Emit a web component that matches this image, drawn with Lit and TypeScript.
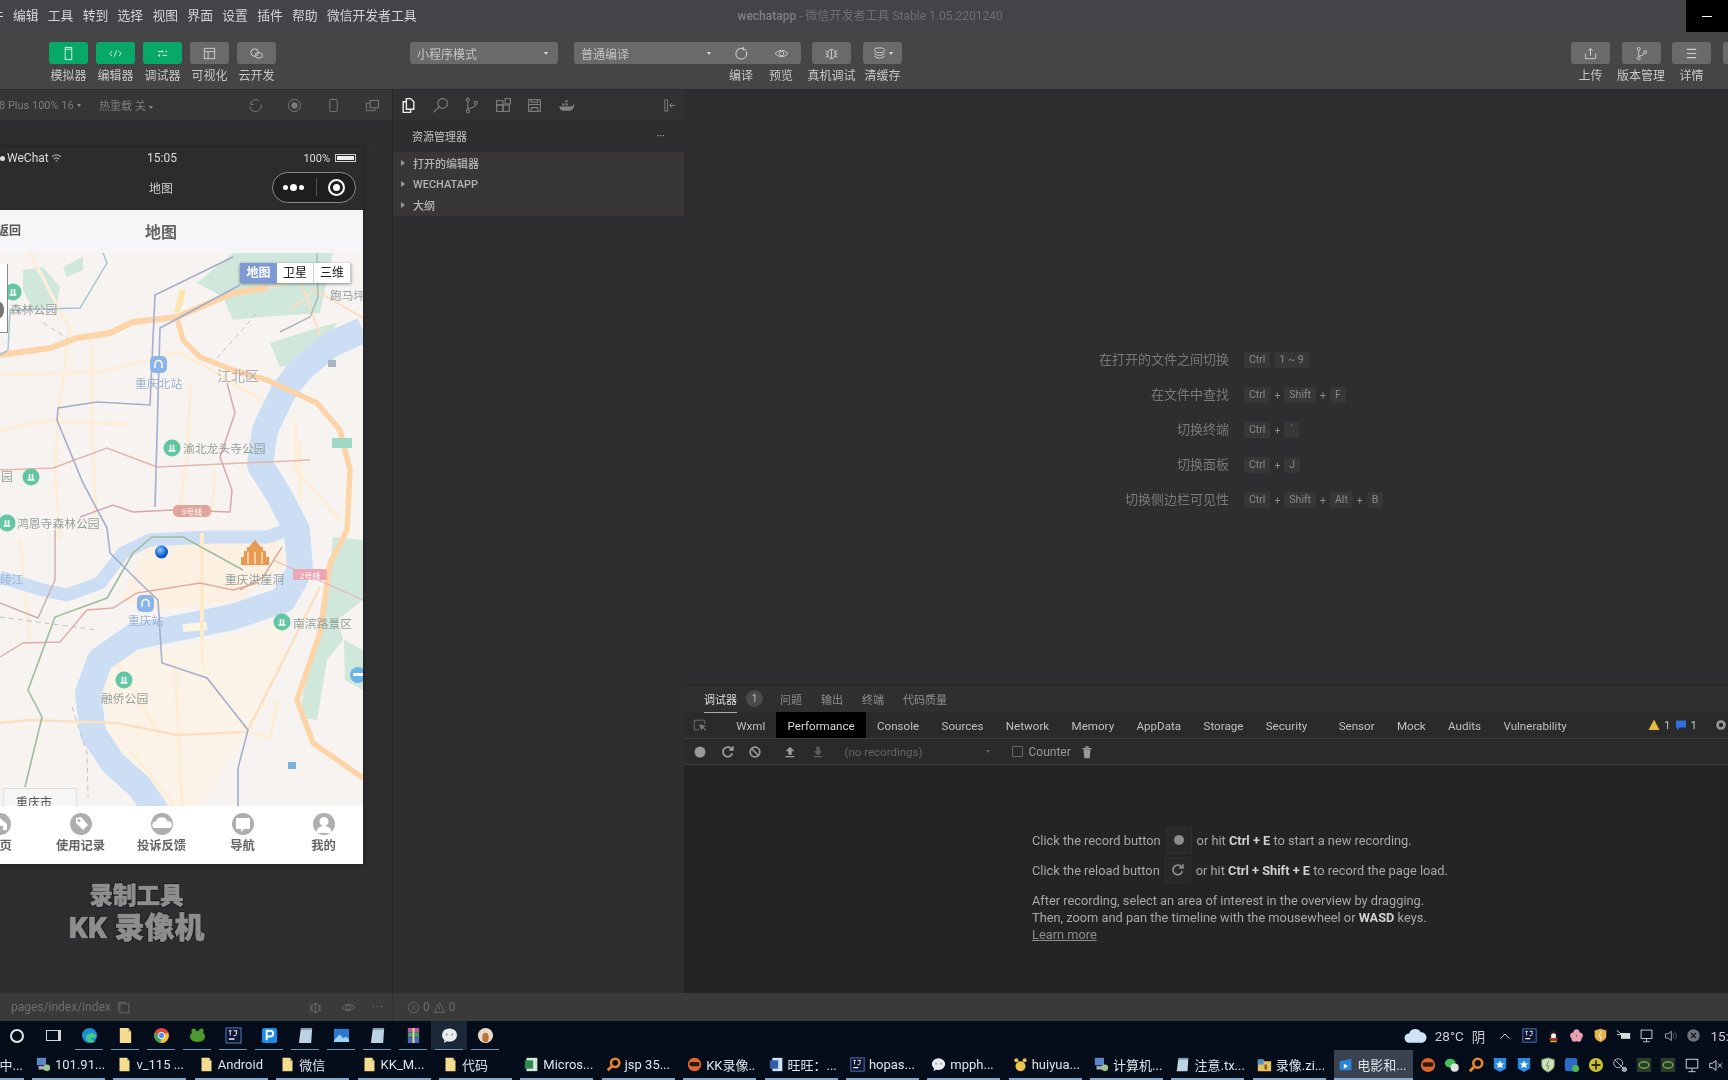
import { LitElement, html, css, svg } from 'lit';
import { customElement } from 'lit/decorators.js';

const MENU = ['编辑', '工具', '转到', '选择', '视图', '界面', '设置', '插件', '帮助', '微信开发者工具'];
const DEV_TABS = ['Wxml', 'Performance', 'Console', 'Sources', 'Network', 'Memory', 'AppData', 'Storage', 'Security', 'Sensor', 'Mock', 'Audits', 'Vulnerability'];
const SHORTCUTS = [
  { label: '在打开的文件之间切换', keys: ['Ctrl', '1 ~ 9'], plain: true },
  { label: '在文件中查找', keys: ['Ctrl', 'Shift', 'F'] },
  { label: '切换终端', keys: ['Ctrl', '`'] },
  { label: '切换面板', keys: ['Ctrl', 'J'] },
  { label: '切换侧边栏可见性', keys: ['Ctrl', 'Shift', 'Alt', 'B'] },
];
const TABBAR = ['首页', '使用记录', '投诉反馈', '导航', '我的'];
const TASKS = [
  ['', '下载中...'], ['pc', '101.91...'], ['folder', 'v_115 ...'], ['folder', 'Android'], ['folder', '微信'],
  ['folder', 'KK_M...'], ['folder', '代码'], ['excel', 'Micros...'], ['search', 'jsp 35...'], ['kk', 'KK录像...'],
  ['word', '旺旺：...'], ['ij', 'hopas...'], ['bubble', 'mpph...'], ['paw', 'huiyua...'], ['pc', '计算机...'],
  ['note', '注意.tx...'], ['zip', '录像.zi...'], ['video', '电影和...'],
];
const QUICK = ['', '', 'edge', 'folder', 'chrome', 'frog', 'ij', 'p', 'note', 'photo', 'note', 'rar', 'bubble', 'avatar'];
const TRAY_TOP = ['ij', 'qq', 'flower', 'shield', 'plug', 'monitor', 'speaker', 'close'];
const TRAY_BOTTOM = ['kk', 'wechat2', 'search', 'star', 'star', 'shieldg', 'tile', 'plus', 'sat', 'nv', 'nv', 'monitor', 'mute'];

function winIcon(kind: string) {
  switch (kind) {
    case 'folder':
      return html`<svg viewBox="0 0 18 18"><path d="M3 1h9l3 4v12H3z" fill="#f6dc8e"/><path d="M12 1v4h3z" fill="#c9a85a"/></svg>`;
    case 'pc':
      return html`<svg viewBox="0 0 18 18"><rect x="1" y="1" width="11" height="9" fill="#5d86c8"/><rect x="3" y="11" width="8" height="4" fill="#aab2bd"/><circle cx="13" cy="13" r="4" fill="#9dc48a"/></svg>`;
    case 'excel':
      return html`<svg viewBox="0 0 18 18"><rect x="3" y="1" width="13" height="16" fill="#d6e8da"/><rect x="1" y="4" width="10" height="10" fill="#2f8a52"/></svg>`;
    case 'search':
      return html`<svg viewBox="0 0 18 18"><circle cx="11" cy="7" r="5" fill="none" stroke="#e8842c" stroke-width="3"/><path d="M7 11l-5 5" stroke="#e8842c" stroke-width="3.4"/></svg>`;
    case 'kk':
      return html`<svg viewBox="0 0 18 18"><circle cx="9" cy="9" r="8" fill="#e0662c"/><rect x="3" y="6" width="12" height="5" rx="2" fill="#2a1a12"/></svg>`;
    case 'word':
      return html`<svg viewBox="0 0 18 18"><rect x="4" y="1" width="12" height="16" fill="#cfe0f2"/><rect x="1" y="4" width="10" height="10" fill="#2f5fa8"/></svg>`;
    case 'ij':
      return html`<svg viewBox="0 0 18 18"><rect x="1" y="1" width="16" height="16" fill="#0b1430" stroke="#5f7fc0"/><rect x="4" y="12" width="6" height="1.5" fill="#fff"/><path d="M4 4h3M5.500 4v5M9 4h4M12 4v4q0 1.500-3 1.200" stroke="#fff" fill="none"/></svg>`;
    case 'bubble':
      return html`<svg viewBox="0 0 18 18"><ellipse cx="9" cy="8.500" rx="8" ry="7" fill="#e8edf0"/><path d="M4 13l-1 4 5-3z" fill="#e8edf0"/><circle cx="6" cy="8" r="1" fill="#8a9298"/><circle cx="12" cy="8" r="1" fill="#8a9298"/></svg>`;
    case 'paw':
      return html`<svg viewBox="0 0 18 18"><circle cx="9" cy="11" r="6" fill="#edc44c"/><circle cx="4" cy="4" r="2.400" fill="#edc44c"/><circle cx="14" cy="4" r="2.400" fill="#edc44c"/></svg>`;
    case 'note':
      return html`<svg viewBox="0 0 18 18"><path d="M4 2h12l-1 15H2z" fill="#bcd3e4"/><path d="M4 1h12v2H4z" fill="#7d99ad"/></svg>`;
    case 'zip':
      return html`<svg viewBox="0 0 18 18"><path d="M1 3h6l2 2h8v12H1z" fill="#e4c160"/><path d="M1 3h7v6H1z" fill="#4f8fd0"/><rect x="9" y="9" width="3" height="6" fill="#8a5a24"/></svg>`;
    case 'video':
      return html`<svg viewBox="0 0 18 18"><path d="M2 5l14-3v14H2z" fill="#2a85d8"/><path d="M7 8l5 3-5 3z" fill="#fff"/></svg>`;
    case 'edge':
      return html`<svg viewBox="0 0 18 18"><circle cx="9" cy="9" r="8" fill="#1a8fd6"/><path d="M5 12a6 6 0 0 1 11-3c1 3-4 3-6 2 1 3 4 5 6 3-3 4-9 3-11-2z" fill="#45c98c"/></svg>`;
    case 'chrome':
      return html`<svg viewBox="0 0 18 18"><circle cx="9" cy="9" r="8" fill="#dd4b3c"/><path d="M9 9L2 6a8 8 0 0 0 6 11z" fill="#3aa658"/><path d="M9 9l7-3a8 8 0 0 1-8 11z" fill="#f3c433"/><circle cx="9" cy="9" r="3.400" fill="#4a8ff0" stroke="#fff"/></svg>`;
    case 'frog':
      return html`<svg viewBox="0 0 18 18"><ellipse cx="9" cy="10" rx="8" ry="6" fill="#4d9a2c"/><circle cx="5" cy="4" r="2.500" fill="#4d9a2c"/><circle cx="13" cy="4" r="2.500" fill="#4d9a2c"/></svg>`;
    case 'p':
      return html`<svg viewBox="0 0 18 18"><rect x="1" y="1" width="16" height="16" rx="2" fill="#1c8ae6"/><path d="M6 14V4h4a3 3 0 0 1 0 6H6" fill="none" stroke="#fff" stroke-width="2"/></svg>`;
    case 'photo':
      return html`<svg viewBox="0 0 18 18"><rect x="1" y="2" width="16" height="14" fill="#2a78d0"/><path d="M1 14l6-6 4 4 3-2 3 3v3H1z" fill="#9fd0f4"/></svg>`;
    case 'rar':
      return html`<svg viewBox="0 0 18 18"><rect x="3" y="1" width="12" height="5" fill="#b85a9a"/><rect x="3" y="6" width="12" height="5" fill="#4c9a6c"/><rect x="3" y="11" width="12" height="6" fill="#4a6ab8"/><rect x="8" y="1" width="2" height="16" fill="#e8d8a0"/></svg>`;
    case 'avatar':
      return html`<svg viewBox="0 0 18 18"><circle cx="9" cy="9" r="8" fill="#e8dcc8"/><ellipse cx="9" cy="11" rx="3.400" ry="5" fill="#b8763c"/></svg>`;
    case 'qq':
      return html`<svg viewBox="0 0 18 18"><ellipse cx="9" cy="8" rx="5" ry="6" fill="#1a1a1a"/><ellipse cx="9" cy="10" rx="3" ry="3.600" fill="#f0f0f0"/><path d="M4 12h10v2H4z" fill="#d8322c"/><path d="M5 15h8v2H5z" fill="#eda72c"/></svg>`;
    case 'flower':
      return html`<svg viewBox="0 0 18 18"><circle cx="9" cy="5" r="3.600" fill="#e8a0ae"/><circle cx="5" cy="9" r="3.600" fill="#e8a0ae"/><circle cx="13" cy="9" r="3.600" fill="#e8a0ae"/><circle cx="6.500" cy="13" r="3.600" fill="#e8a0ae"/><circle cx="11.500" cy="13" r="3.600" fill="#e8a0ae"/></svg>`;
    case 'shield':
      return html`<svg viewBox="0 0 18 18"><path d="M9 1l7 2v6c0 4-3 6-7 8-4-2-7-4-7-8V3z" fill="#e8b24c"/><path d="M10 4l-3 6h3l-1 4" stroke="#fff" fill="none"/></svg>`;
    case 'shieldg':
      return html`<svg viewBox="0 0 18 18"><path d="M9 1l7 2v6c0 4-3 6-7 8-4-2-7-4-7-8V3z" fill="#cfe0c0" stroke="#6a9a4c"/><path d="M10 4l-3 6h3l-1 4" stroke="#4c8a3c" fill="none"/></svg>`;
    case 'plug':
      return html`<svg viewBox="0 0 18 18"><rect x="6" y="6" width="11" height="7" fill="#d8dce0"/><path d="M1 3l5 4M1 8h5" stroke="#fff"/></svg>`;
    case 'monitor':
      return html`<svg viewBox="0 0 18 18" fill="none" stroke="#e8e8e8"><rect x="2.500" y="2.500" width="13" height="10"/><path d="M9 13v3M5 16.500h8"/></svg>`;
    case 'speaker':
      return html`<svg viewBox="0 0 18 18" fill="none" stroke="#b8bcc4"><path d="M3 7h3l4-3v11l-4-3H3z"/><path d="M12 6q2 3 0 6M14 4q4 5 0 10" stroke="#5a6068"/></svg>`;
    case 'mute':
      return html`<svg viewBox="0 0 18 18" fill="none" stroke="#e8e8e8"><path d="M2 7h3l4-3v11l-4-3H2z"/><path d="M11 7l5 5M16 7l-5 5"/></svg>`;
    case 'close':
      return html`<svg viewBox="0 0 18 18"><circle cx="9" cy="9" r="7.500" fill="#6c7078"/><path d="M6 6l6 6M12 6l-6 6" stroke="#15181e" stroke-width="1.600"/></svg>`;
    case 'wechat2':
      return html`<svg viewBox="0 0 18 18"><ellipse cx="7" cy="7" rx="6" ry="5" fill="#3fc25a"/><circle cx="12" cy="12" r="4.600" fill="#dfe4e0"/></svg>`;
    case 'star':
      return html`<svg viewBox="0 0 18 18"><path d="M2 1h14v12l-7 4-7-4z" fill="#2a8ae0"/><path d="M9 4l1.500 3 3 .4-2.200 2 .6 3-2.900-1.500-2.900 1.500.6-3-2.200-2 3-.4z" fill="#fff"/></svg>`;
    case 'tile':
      return html`<svg viewBox="0 0 18 18"><rect x="1" y="1" width="14" height="15" rx="3" fill="#2a6cc8"/><circle cx="13" cy="13" r="4" fill="#4cb84c"/></svg>`;
    case 'plus':
      return html`<svg viewBox="0 0 18 18"><circle cx="9" cy="9" r="8" fill="#c8c030"/><path d="M9 4v10M4 9h10" stroke="#2a2a10" stroke-width="2"/></svg>`;
    case 'sat':
      return html`<svg viewBox="0 0 18 18" fill="none" stroke="#c8ccd0"><circle cx="7" cy="7" r="5"/><path d="M3 3l12 12"/><circle cx="14" cy="14" r="2.400" fill="#9aa0a8"/></svg>`;
    case 'nv':
      return html`<svg viewBox="0 0 18 18"><rect x="1" y="1" width="16" height="16" fill="#2c3a2c"/><ellipse cx="9" cy="9" rx="5.500" ry="3.600" fill="none" stroke="#6fa84c" stroke-width="1.600"/></svg>`;
    default:
      return html``;
  }
}

function toolIcon(kind: string) {
  switch (kind) {
    case 'phone':
      return html`<svg viewBox="0 0 16 16" fill="none" stroke="currentColor"><rect x="4.500" y="1.500" width="7" height="13"/><path d="M4.500 3.500h7"/></svg>`;
    case 'code':
      return html`<svg viewBox="0 0 16 16" fill="none" stroke="currentColor"><path d="M4 5.500L2 8l2 2.500M12 5.500L14 8l-2 2.500M9.500 4.500l-3 7"/></svg>`;
    case 'debug':
      return html`<svg viewBox="0 0 16 16" fill="none" stroke="currentColor"><path d="M3 6h5M11 6h2M3 10h2M8 10h5M8 4.500v3M5 8.500v3"/></svg>`;
    case 'visual':
      return html`<svg viewBox="0 0 16 16" fill="none" stroke="currentColor"><rect x="2.500" y="2.500" width="11" height="11"/><path d="M2.500 6h11M6.500 6v7.500"/></svg>`;
    case 'cloud':
      return html`<svg viewBox="0 0 16 16" fill="none" stroke="currentColor"><circle cx="6" cy="7" r="4"/><ellipse cx="10.500" cy="10" rx="4" ry="3"/></svg>`;
    case 'reload':
      return html`<svg viewBox="0 0 16 16" fill="none" stroke="currentColor" stroke-width="1.100"><path d="M10 2.800a5.800 5.800 0 1 0 3 2.800M10 1v3h3"/></svg>`;
    case 'eye':
      return html`<svg viewBox="0 0 16 16" fill="none" stroke="currentColor"><path d="M1 8q7-7 14 0-7 7-14 0z"/><circle cx="8" cy="8" r="2.400"/></svg>`;
    case 'bug':
      return html`<svg viewBox="0 0 16 16" fill="none" stroke="currentColor"><ellipse cx="8" cy="8.500" rx="4" ry="5"/><path d="M8 4v9M1.500 5l3 1.500M14.500 5l-3 1.500M1.500 12l3-1.500M14.500 12l-3-1.500M1.500 8.500h2.500M12 8.500h2.500"/></svg>`;
    case 'stack':
      return html`<svg viewBox="0 0 16 16" fill="none" stroke="currentColor"><ellipse cx="8" cy="4.500" rx="5.500" ry="2.500"/><path d="M2.500 8q5.500 4 11 0M2.500 11q5.500 4 11 0"/></svg>`;
    case 'upload':
      return html`<svg viewBox="0 0 16 16" fill="none" stroke="currentColor"><path d="M2.500 8v5.500h11V8M8 10.500V3M5.500 5L8 2.500 10.500 5"/></svg>`;
    case 'branch':
      return html`<svg viewBox="0 0 16 16" fill="none" stroke="currentColor"><circle cx="5" cy="3" r="1.600"/><circle cx="5" cy="13" r="1.600"/><circle cx="12" cy="6.500" r="1.600"/><path d="M5 4.600v6.800M5.500 11q5-1 5.500-3.200"/></svg>`;
    case 'menu':
      return html`<svg viewBox="0 0 16 16" fill="none" stroke="currentColor" stroke-width="1.300"><path d="M3 3.500h10M3 8h10M3 12.500h10"/></svg>`;
    default:
      return html``;
  }
}

// grey disc with a white glyph, one per tab
const TAB_GLYPHS = [
  svg`<path d="M4 11l7-6 7 6v6h-4v-4h-6v4H4z" fill="#fff"/>`,
  svg`<path d="M6 5l5-1 7 8-5 5-7-7z" fill="#fff"/><circle cx="9" cy="7.500" r="1.500" fill="#aeaeb0"/>`,
  svg`<path d="M3 15a3.500 3.500 0 0 1 2-6.500 6 6 0 0 1 11.500 0A3.500 3.500 0 0 1 19 15z" fill="#fff"/>`,
  svg`<path d="M5 5h12a1 1 0 0 1 1 1v9a1 1 0 0 1-1 1h-5l-3 3v-3H5a1 1 0 0 1-1-1V6a1 1 0 0 1 1-1z" fill="#fff"/>`,
  svg`<circle cx="11" cy="8.500" r="4.500" fill="#fff"/><path d="M3 20q1-7 8-7t8 7z" fill="#fff"/>`,
];

function mapGraphic() {
  const greens = [
    '23,270 43,267 60,287 57,303 33,310 23,290',
    '63,267 83,257 83,270 67,277',
    '197,283 233,253 333,253 320,313 260,317 233,320 223,297',
    '270,343 320,327 337,323 317,363 280,367',
    '333,537 363,540 363,600 337,620 343,640 327,660 317,720 300,717 303,693 320,637 330,570',
    '344,640 363,650 363,690 345,680',
  ];
  const paleRoads = [
    'M0 374 L100 372 L150 360 L178 352 L205 366 L235 385 L262 400',
    'M30 253 L70 330 L60 400 L55 470 L60 540',
    'M92 340 L92 420 L96 520',
    'M190 385 L188 450 L180 505',
    'M0 430 L50 420 L130 425',
    'M295 420 L296 470 L340 520',
    'M200 600 L203 670',
    'M120 640 L118 665 L160 735',
    'M130 750 L175 806',
    'M250 732 L270 738 L278 700',
    'M20 540 L30 640',
    'M175 660 L182 806',
    'M300 440 L300 500',
    'M215 470 L212 510',
  ];
  const lines: [string, string, number][] = [
    ['M103 253L107 263L80 308L10 310L8 350L0 355', '#a2c3d2', 1.4],
    ['M317 253L318 297L310 317L280 332', '#aeb8b8', 1.4],
    ['M0 470L53 468L107 448L157 467L310 460', '#e4b6ac', 1.4],
    ['M80 517L113 505L133 512L173 510L230 512L232 490L220 457L235 413L227 383', '#d8a8a8', 1.5],
    ['M0 657L23 643L60 642L87 610L113 608L137 593L200 583L233 590L257 583', '#e2aca6', 1.4],
    ['M273 560L363 600', '#e8b8b4', 1.2],
    ['M0 603L38 618L55 580L55 530', '#c9b0a6', 1.4],
    ['M240 590L263 577L282 547', '#c9a49c', 1.4],
    ['M25 787L42 717L28 690L55 617L107 598L133 553L152 537L183 537L243 570', '#9dbd9c', 1.6],
    ['M233 257L155 295L150 405L97 402L58 408L57 420L83 483L107 528L110 553L140 583L158 600L162 663L207 678L248 730L238 768L238 807', '#a4aecb', 1.6],
    ['M240 285L160 328L155 507', '#a4aecb', 1.6],
  ];
  const parks: [number, number][] = [[13, 292], [172, 448], [31, 477], [7, 523], [282, 622], [124, 680]];
  const stations: [number, number][] = [[158.5, 364.5], [145.5, 603.5]];
  const labels: [number, number, string, string][] = [
    [10, 314, '森林公园', 'poi'],
    [183, 453, '渝北龙头寺公园', 'poi'],
    [1, 481, '园', 'poi'],
    [17, 528, '鸿恩寺森林公园', 'poi'],
    [293, 628, '南滨路景区', 'poi'],
    [101, 703, '融侨公园', 'poi'],
    [135, 388, '重庆北站', 'station'],
    [128, 625, '重庆站', 'station'],
    [217, 381, '江北区', 'district'],
    [330, 300, '跑马坪', 'poi'],
    [225, 584, '重庆洪崖洞', 'poi'],
    [0, 584, '陵江', 'station'],
  ];
  return html`<svg class="map-svg" viewBox="0 253 363 553" width="363" height="553">
    <rect x="0" y="253" width="363" height="553" fill="#f7f3f1"/>
    <path d="M150 540L270 535L290 560L240 600L160 610L120 600z" fill="#fbf0e2"/>
    <path d="M100 660L210 640L290 620L270 700L200 806H150L110 740z" fill="#fcf3e8"/>
    ${greens.map((p) => svg`<polygon points=${p} fill="#d0e7db"/>`)}
    ${paleRoads.map((d) => svg`<path d=${d} fill="none" stroke="#fdeed9" stroke-width="3.5"/>`)}
    <path d="M363 330L330 345L300 370L283 392L265 430L260 465L280 497L297 530L300 570L283 600L233 617L183 627L133 637L100 660L88 693L93 733L113 763L140 787L157 812" fill="none" stroke="#cbdef3" stroke-width="26" stroke-linejoin="round"/>
    <path d="M0 577L43 590L67 595L100 583L123 553L150 540L210 537L267 537L297 527" fill="none" stroke="#cbdef3" stroke-width="13" stroke-linejoin="round"/>
    <path d="M183 628l24-2" stroke="#fdf4e4" stroke-width="8"/>
    <path d="M202 533V640" stroke="#fdeacb" stroke-width="4"/>
    <path d="M0 723L30 720L117 723L177 735L247 732L287 653L320 587" fill="none" stroke="#fbdfc0" stroke-width="2.5"/>
    <path d="M183 290L177 312" stroke="#fde6ac" stroke-width="6"/>
    <path d="M0 355L50 348L77 338L110 333L133 322L177 317L233 293L267 288" fill="none" stroke="#fdd3a8" stroke-width="6"/>
    <path d="M177 318L183 340L200 357L233 370L267 380L317 403L340 430L350 470L347 530L330 563L320 633L297 700L313 743L363 778" fill="none" stroke="#fdd3a8" stroke-width="5.5" stroke-linejoin="round"/>
    <path d="M267 288L300 280L320 335M290 310L315 290L363 318" fill="none" stroke="#fbdfc0" stroke-width="2"/>
    <path d="M72 707L87 753L88 797M43 323L67 338M217 358L257 313M0 617L97 630" fill="none" stroke="#c2c2c2" stroke-width="1" stroke-dasharray="5 4"/>
    ${lines.map(([d, c, w]) => svg`<path d=${d} fill="none" stroke=${c} stroke-width=${w}/>`)}
    <rect x="173" y="505" width="38" height="12" rx="5" fill="#e3a49c"/>
    <text x="192" y="515" class="badge">9号线</text>
    <rect x="293" y="569" width="34" height="11" rx="2" fill="#eda6b4"/>
    <text x="310" y="579" class="badge">2号线</text>
    <rect x="332" y="438" width="20" height="10" fill="#9fd8c4"/>
    ${parks.map(([x, y]) => svg`<circle cx=${x} cy=${y} r="8.5" fill="#62c6a2"/><path d="M${x - 3.5} ${y + 3}h7M${x - 1.5} ${y + 3}v-6M${x + 1.5} ${y + 3}v-6" stroke="#fff" stroke-width="1.600" fill="none"/>`)}
    ${stations.map(([x, y]) => svg`<rect x=${x - 8.5} y=${y - 8.5} width="17" height="17" rx="5" fill="#8cb4ec"/><path d="M${x - 3.5} ${y + 3.5}v-4a3.500 3.500 0 0 1 7 0v4" fill="none" stroke="#fff" stroke-width="1.400"/>`)}
    <circle cx="358" cy="675" r="8" fill="#6cb4e8"/><rect x="353" y="673" width="10" height="3" fill="#fff"/>
    <rect x="288" y="762" width="8" height="7" fill="#7cb2dc"/><rect x="328" y="360" width="8" height="7" fill="#a8b6c4"/>
    <path d="M255 540l6 7h-12zM247 547h16v4h-16zM244 551h22v6h-22zM241 557h28v8h-28z" fill="#e89a52"/>
    <path d="M248 552v12M255 552v12M262 552v12" stroke="#fbe0b8" stroke-width="1.500"/>
    ${labels.map(([x, y, t, c]) => svg`<text x=${x} y=${y} class=${c}>${t}</text>`)}
    <defs><radialGradient id="loc" cx="40%" cy="35%"><stop offset="0" stop-color="#8cc8ff"/><stop offset="1" stop-color="#0a58c8"/></radialGradient></defs>
    <circle cx="161.5" cy="552" r="6.500" fill="url(#loc)"/>
  </svg>`;
}

@customElement('app-root')
export class AppRoot extends LitElement {
  static styles = css`
    :host {
      display: block;
      width: 1728px;
      height: 1080px;
      overflow: hidden;
      background: #2e2e30;
      font-family: Roboto, "Noto Sans CJK SC", sans-serif;
      color: #ccc;
      filter: blur(0.4px);
    }
    svg { display: block; }

    /* title bar + toolbar */
    .titlebar {
      height: 32px;
      box-sizing: border-box;
      padding-bottom: 4px;
      display: flex;
      align-items: center;
      background: #444347;
      font-size: 12.8px;
      white-space: nowrap;
    }
    .menu { display: flex; gap: 9.3px; margin-left: -22px; color: #d4d4d4; }
    .apptitle { margin-left: 321px; font-size: 12px; color: #6f6f72; }
    .apptitle b { font-weight: 500; color: #808080; }
    .minimize {
      margin-left: auto;
      margin-bottom: -4px;
      width: 42px;
      height: 32px;
      background: #000;
      display: flex;
      align-items: center;
      justify-content: center;
    }
    .minimize i { width: 10px; height: 1px; background: #fff; }

    .toolbar {
      height: 58px;
      padding: 10px 0 0 49px;
      box-sizing: border-box;
      display: flex;
      align-items: flex-start;
      background: #454545;
      border-bottom: 1px solid #2a2a2b;
      white-space: nowrap;
    }
    .tool { flex: none; width: 39px; display: flex; flex-direction: column; align-items: center; margin-right: 8px; }
    .tool .btn {
      width: 39px;
      height: 22px;
      border-radius: 3px;
      background: #6a6a6a;
      color: #cfcfcf;
      display: flex;
      align-items: center;
      justify-content: center;
      gap: 2px;
    }
    .tool .btn svg { width: 15px; height: 15px; }
    .tool .btn.on { background: #07a868; color: #d8f3e6; }
    .tool .lbl { font-size: 12px; line-height: 16px; margin-top: 4px; color: #c8c8c8; }
    .caret { width: 0; height: 0; border: 2.5px solid transparent; border-top: 3px solid #ddd; border-bottom: 0; }
    .select {
      flex: none;
      height: 22px;
      background: #6a6a6a;
      border-radius: 3px;
      display: flex;
      align-items: center;
      justify-content: space-between;
      box-sizing: border-box;
      padding: 0 10px 0 7px;
      font-size: 12px;
      color: #c4c4c4;
    }
    .mode { width: 148px; margin-left: 126px; margin-right: 16px; }
    .compile { width: 147px; border-radius: 3px 0 0 3px; }
    .tool.cell { width: 40px; margin-right: 0; }
    .tool.cell .btn { width: 40px; border-radius: 0; }
    .tool.cell.last .btn { border-radius: 0 3px 3px 0; }
    .tool.device { margin-left: 11px; margin-right: 12px; }
    .tool.cache { margin-right: 0; }
    .right-tools { display: flex; margin-left: 669px; }
    .right-tools .tool { margin-right: 11.5px; }

    /* main area */
    .main { height: 903px; display: flex; overflow: hidden; }
    .sim { position: relative; flex: none; width: 393px; box-sizing: border-box; border-right: 1px solid #252526; overflow: hidden; }
    .subbar {
      height: 30px;
      display: flex;
      align-items: center;
      background: #363636;
      color: #7c7c7c;
      font-size: 11px;
      white-space: nowrap;
    }
    .subbar svg { width: 15px; height: 15px; flex: none; }
    .subbar .caret { border-top-color: #888; display: inline-block; vertical-align: middle; margin-left: 3px; }
    .device-name { margin-left: -1px; width: 100px; }
    .hot { width: 149px; }
    .sim-icons { display: flex; gap: 24px; }

    .phone { width: 363px; margin-top: 28px; box-shadow: 0 0 6px rgba(0, 0, 0, 0.4); }
    .phone-status {
      height: 20px;
      display: grid;
      grid-template-columns: 147px 29px 1fr;
      align-items: center;
      background: #2c2c2e;
      color: #ddd;
      font-size: 12px;
    }
    .wechat { display: flex; align-items: center; gap: 2px; }
    .wechat i { width: 5px; height: 5px; border-radius: 50%; background: #ddd; }
    .batt { display: flex; justify-content: flex-end; align-items: center; gap: 5px; padding-right: 7px; font-size: 11px; }
    .batt i { width: 21px; height: 8px; border: 1px solid #ccc; box-sizing: border-box; padding: 1px; display: block; }
    .batt i::after { content: ""; display: block; height: 100%; background: #eee; }
    .phone-nav {
      height: 42px;
      padding-bottom: 4px;
      box-sizing: border-box;
      display: grid;
      grid-template-columns: 149px 24px 1fr;
      align-items: center;
      background: #2c2c2e;
      color: #ccc;
      font-size: 12px;
    }
    .capsule {
      justify-self: end;
      margin-right: 7px;
      width: 84px;
      height: 31px;
      box-sizing: border-box;
      border: 1px solid #8a8a8c;
      border-radius: 16px;
      background: #1e1e20;
      display: flex;
      align-items: center;
      justify-content: space-between;
      padding: 0 10px;
    }
    .dots { display: flex; align-items: center; gap: 2px; }
    .dots i { width: 5px; height: 5px; border-radius: 50%; background: #fff; }
    .dots i:nth-child(2) { width: 7px; height: 7px; }
    .capsule .rule { width: 1px; height: 18px; background: #555; }
    .capsule .target { width: 17px; height: 17px; box-sizing: border-box; border-radius: 50%; border: 2px solid #fff; display: flex; align-items: center; justify-content: center; }
    .capsule .target::after { content: ""; width: 7px; height: 7px; background: #fff; border-radius: 50%; }
    .page-head {
      height: 43px;
      display: grid;
      grid-template-columns: 145px auto;
      align-items: center;
      background: #f6f6f8;
      color: #555;
    }
    .page-head span:first-child { font-size: 12px; font-weight: 700; margin: -4px 0 0 -3px; }
    .page-head span:last-child { font-size: 16px; font-weight: 700; color: #666; margin-top: -2px; }
    .map { position: relative; height: 553px; overflow: hidden; filter: blur(0.6px); }
    .map-svg text { font-size: 11.8px; font-family: "Noto Sans CJK SC", sans-serif; }
    .poi { fill: #94a09c; }
    .station { fill: #9ab3d6; }
    .district { fill: #b0b0b0; font-size: 14px !important; }
    .badge { fill: #fff; font-size: 8px !important; text-anchor: middle; }
    .maptype {
      position: absolute;
      left: 240px;
      top: 10px;
      display: flex;
      height: 20px;
      box-shadow: 0 1px 3px rgba(0, 0, 0, 0.45);
      font-size: 12px;
      line-height: 20px;
      background: #fff;
      color: #222;
    }
    .maptype span { width: 37px; text-align: center; border-right: 1px solid #ccc; box-sizing: border-box; }
    .maptype span:first-child { background: #7d9ad6; color: #fff; font-weight: 700; border: 0; }
    .mapside {
      position: absolute;
      left: 0;
      top: 11px;
      width: 7px;
      height: 68px;
      background: #fff;
      border-right: 1px solid #888;
      border-bottom: 1px solid #888;
    }
    .mapside i { position: absolute; left: -5px; top: 38px; width: 9px; height: 16px; border-radius: 50%; background: #777; }
    .mapcity {
      position: absolute;
      left: 3px;
      bottom: 0;
      width: 74px;
      height: 18px;
      box-sizing: border-box;
      background: #f6f6f6;
      border: 1px solid #ddd;
      border-bottom: 0;
      padding: 6px 0 0 12px;
      font-size: 12px;
      line-height: 16px;
      color: #555;
      overflow: hidden;
    }
    .tabbar { height: 58px; display: flex; margin-left: -41px; background: #fff; }
    .tabbar div { flex: none; width: 81px; display: flex; flex-direction: column; align-items: center; padding-top: 7px; box-sizing: border-box; }
    .tabbar svg { width: 22px; height: 22px; }
    .tabbar span { font-size: 12.3px; font-weight: 700; line-height: 16px; margin-top: 3px; color: #666; }
    .watermark {
      position: absolute;
      left: 68px;
      top: 792px;
      width: 137px;
      display: flex;
      flex-direction: column;
      align-items: center;
      font-weight: 900;
      color: #8e8e8e;
      white-space: nowrap;
      -webkit-text-stroke: 0.6px #8e8e8e;
      text-shadow: 1px 1px 0 #1a1a1a, -1px -1px 0 #1a1a1a, 1px -1px 0 #1a1a1a, -1px 1px 0 #1a1a1a;
    }
    .watermark span:first-child { font-size: 23.5px; line-height: 28px; }
    .watermark span:last-child { font-size: 30px; line-height: 36px; }

    .explorer { flex: none; width: 291px; box-sizing: border-box; }
    .explorer-tabs { height: 30px; display: flex; align-items: center; padding-left: 7px; background: #313133; color: #838385; }
    .explorer-tabs svg { flex: none; width: 17px; height: 17px; margin-right: 14.5px; }
    .explorer-tabs svg.on { color: #eee; }
    .explorer-tabs .collapse { margin: 0 7px 0 auto; width: 15px; height: 15px; }
    .explorer-head {
      height: 32px;
      display: flex;
      justify-content: space-between;
      align-items: center;
      padding: 0 19px;
      font-size: 11px;
      color: #c0c0c0;
    }
    .explorer-row {
      height: 21.4px;
      display: flex;
      align-items: center;
      gap: 6px;
      padding-left: 8px;
      background: #393637;
      font-size: 11px;
      font-weight: 500;
      color: #b4b4b4;
    }
    .explorer-row::before { content: ""; border: 3px solid transparent; border-left: 4px solid #999; border-right: 0; margin-right: 2px; }

    .workspace { flex: 1; display: flex; flex-direction: column; min-width: 0; }
    .editor { height: 594px; box-sizing: border-box; padding: 262px 0 0 345px; }
    .help { display: grid; grid-template-columns: 200px auto; column-gap: 15px; row-gap: 19px; justify-content: start; }
    .help .name { font-size: 13px; line-height: 16px; color: #79797b; text-align: right; white-space: nowrap; }
    .keys { display: flex; align-items: center; gap: 4px; font-size: 10.5px; color: #8a8a8c; }
    .keys kbd {
      font: inherit;
      min-width: 15px;
      height: 16px;
      line-height: 16px;
      padding: 0 5px;
      box-sizing: border-box;
      text-align: center;
      background: #373737;
      border-radius: 2px;
    }

    .debug { height: 309px; display: flex; flex-direction: column; border-top: 1px solid #252526; box-sizing: border-box; }
    .debug-tabs {
      height: 27px;
      flex: none;
      display: flex;
      align-items: center;
      padding-left: 20px;
      font-size: 11px;
      color: #8e8e8e;
      background: #2f2f30;
    }
    .debug-tabs span { margin-right: 19px; }
    .debug-tabs .on { position: relative; margin-right: 9px; color: #ddd; }
    .debug-tabs .on::after { content: ""; position: absolute; left: 0; right: 0; bottom: -6px; height: 1px; background: #aaa; }
    .debug-tabs .count { width: 17px; height: 17px; line-height: 17px; text-align: center; border-radius: 50%; background: #4a4a4a; font-size: 10px; margin-right: 17px; color: #bbb; }
    .dev-tabs {
      height: 27px;
      flex: none;
      display: flex;
      align-items: stretch;
      background: #2a2a2b;
      border-bottom: 1px solid #3c3c3c;
      box-sizing: border-box;
      font-size: 11.6px;
      color: #c0c0c0;
      white-space: nowrap;
    }
    .dev-tabs .inspect { flex: none; width: 41px; display: flex; align-items: center; padding-left: 9px; box-sizing: border-box; color: #777; }
    .dev-tabs .inspect svg { width: 14px; height: 14px; }
    .dev-tabs .tab { display: flex; align-items: center; padding: 1px 11.2px 0; }
    .dev-tabs .tab.on { background: #000; color: #d8d8d8; }
    .dev-tabs .tab.gap { margin-left: 9px; }
    .dev-status { margin-left: auto; display: flex; align-items: center; gap: 4px; font-size: 11.5px; overflow: hidden; }
    .dev-status svg { width: 12px; height: 12px; flex: none; }
    .dev-status .gear { width: 14px; height: 14px; margin-left: 13px; margin-right: 0; color: #999; }
    .rec-bar {
      height: 26px;
      flex: none;
      display: flex;
      align-items: center;
      background: #2a2a2b;
      border-bottom: 1px solid #3c3c3c;
      box-sizing: border-box;
      color: #9a9a9a;
      font-size: 12px;
    }
    .rec-bar svg { width: 14px; height: 14px; flex: none; }
    .rec-bar .first { margin-left: 9px; }
    .rec-bar .i { margin-left: 13.5px; }
    .rec-bar .up { margin-left: 21px; }
    .rec-bar .dim { color: #5c5c5c; }
    .rec-bar .none { width: 145px; margin-left: 20px; color: #666; font-size: 11.5px; display: flex; justify-content: space-between; align-items: center; }
    .rec-bar .none .caret { border-top-color: #666; }
    .rec-bar .box { width: 11px; height: 11px; margin-left: 22px; margin-right: 6px; border: 1px solid #666; border-radius: 1px; box-sizing: border-box; }
    .rec-bar .trash { margin-left: 9px; }
    .rec-body {
      flex: 1;
      background: #242424;
      box-sizing: border-box;
      padding: 60px 0 0 348px;
      font-size: 12.8px;
      color: #a8a8a8;
      white-space: nowrap;
    }
    .rec-body b { color: #d0d0d0; font-weight: 700; }
    .rec-line { height: 30px; display: flex; align-items: center; gap: 5px; }
    .rec-line .key { flex: none; width: 26px; height: 27px; background: #282828; border: 1px solid #2f2f2f; box-sizing: border-box; display: flex; align-items: center; justify-content: center; color: #8c8c8c; }
    .rec-line .key i { width: 10px; height: 10px; border-radius: 50%; background: #8c8c8c; }
    .rec-line .key svg { width: 14px; height: 14px; }
    .rec-note { margin-top: 7px; line-height: 17px; }
    .rec-note u { color: #8c8c8c; }

    .statusbar { height: 28px; display: flex; align-items: center; background: #3a3a3a; color: #6e6e6e; font-size: 12px; white-space: nowrap; }
    .statusbar svg { flex: none; width: 15px; height: 15px; }
    .status-left { flex: none; width: 393px; box-sizing: border-box; height: 100%; display: flex; align-items: center; padding-left: 11px; border-right: 1px solid #303030; }
    .status-left .copy { margin-left: 6px; width: 13px; height: 13px; }
    .status-left .bug { margin-left: 178px; }
    .status-left .eye { margin-left: 18px; }
    .status-left .more { margin-left: 16px; letter-spacing: 1px; }
    .status-right { display: flex; align-items: center; gap: 3px; padding-left: 14px; }
    .status-right svg { width: 13px; height: 13px; }

    /* windows taskbar */
    .taskbar { height: 59px; background: #050c1a; color: #dfe3e8; white-space: nowrap; overflow: hidden; }
    .quick { height: 29px; display: flex; align-items: center; margin-left: -1px; }
    .quick .app { flex: none; width: 36px; height: 29px; box-sizing: border-box; display: flex; align-items: center; justify-content: center; position: relative; }
    .quick .app svg { width: 17px; height: 17px; }
    .quick .app.run::after { content: ""; position: absolute; left: 4px; right: 4px; bottom: 0; height: 1px; background: #6f93b8; }
    .quick .app.sel { background: #1b2736; }
    .circle { width: 14px; height: 14px; box-sizing: border-box; border: 2.5px solid #e6e6e6; border-radius: 50%; }
    .tasksview { width: 15px; height: 11px; box-sizing: border-box; border: 1px solid #d4d4d4; border-width: 1px 3px 1px 1px; }
    .systray { margin-left: auto; display: flex; align-items: center; font-size: 13.5px; color: #c8ccd2; }
    .systray .cloud { margin-right: 8px; width: 23px; height: 17px; flex: none; }
    .systray .cn { margin: 0 15px 0 8px; }
    .systray .chev { width: 10px; height: 6px; margin-right: 8px; }
    .systray .ti { flex: none; width: 23.4px; display: flex; justify-content: center; }
    .systray .ti svg { width: 15px; height: 15px; }
    .systray .clock { margin-left: 5px; margin-right: -16px; }
    .tasks { height: 30px; display: flex; margin-left: -49.4px; }
    .task {
      flex: none;
      width: 73px;
      height: 30px;
      margin-right: 8.4px;
      box-sizing: border-box;
      border-bottom: 2px solid #86a9cc;
      display: flex;
      align-items: center;
      gap: 4px;
      padding-left: 4px;
      font-size: 13px;
      overflow: hidden;
    }
    .task svg { flex: none; width: 15px; height: 15px; }
    .task .blank { flex: none; width: 15px; }
    .task.active { width: 79px; margin-right: 3px; background: #3a4250; }
    .tray { display: flex; align-items: center; height: 30px; }
    .tray .ti { flex: none; width: 24px; display: flex; justify-content: center; }
    .tray .ti svg { width: 16px; height: 16px; }
  `;

  render() {
    return html`
      <div class="titlebar">
        <div class="menu"><span>文件</span>${MENU.map((m) => html`<span>${m}</span>`)}</div>
        <div class="apptitle"><b>wechatapp</b> - 微信开发者工具 Stable 1.05.2201240</div>
        <div class="minimize"><i></i></div>
      </div>
      ${this.renderToolbar()}
      <div class="main">
        ${this.renderSim()}
        ${this.renderExplorer()}
        <div class="workspace">
          <div class="editor">
            <div class="help">
              ${SHORTCUTS.map((s) => html`
                <div class="name">${s.label}</div>
                <div class="keys">${s.keys.map((k, i) => html`${i && !s.plain ? html`<span>+</span>` : ''}<kbd>${k}</kbd>`)}</div>
              `)}
            </div>
          </div>
          ${this.renderDebug()}
        </div>
      </div>
      <div class="statusbar">
        <div class="status-left">
          <span>pages/index/index</span>
          <svg class="copy" viewBox="0 0 16 16" fill="none" stroke="currentColor"><rect x="3.5" y="3.5" width="11" height="11"/><path d="M1.5 11V1.5H11"/></svg>
          <span class="bug">${toolIcon('bug')}</span>
          <span class="eye">${toolIcon('eye')}</span>
          <span class="more">···</span>
        </div>
        <div class="status-right">
          <svg viewBox="0 0 16 16" fill="none" stroke="currentColor"><circle cx="8" cy="8" r="6.5"/><path d="M5.5 5.5l5 5M10.500 5.500l-5 5"/></svg><span>0</span>
          <svg viewBox="0 0 16 16" fill="none" stroke="currentColor"><path d="M8 2l6.500 12h-13zM8 6.500v4"/></svg><span>0</span>
        </div>
      </div>
      ${this.renderTaskbar()}
    `;
  }

  renderToolbar() {
    const tool = (icon: string, label: string, cls = '', on = false, caret = false) => html`
      <div class="tool ${cls}">
        <div class="btn ${on ? 'on' : ''}">${toolIcon(icon)}${caret ? html`<span class="caret"></span>` : ''}</div>
        <span class="lbl">${label}</span>
      </div>`;
    return html`<div class="toolbar">
      ${tool('phone', '模拟器', '', true)}
      ${tool('code', '编辑器', '', true)}
      ${tool('debug', '调试器', '', true)}
      ${tool('visual', '可视化')}
      ${tool('cloud', '云开发')}
      <div class="select mode"><span>小程序模式</span><span class="caret"></span></div>
      <div class="select compile"><span>普通编译</span><span class="caret"></span></div>
      ${tool('reload', '编译', 'cell')}
      ${tool('eye', '预览', 'cell last')}
      ${tool('bug', '真机调试', 'device')}
      ${tool('stack', '清缓存', 'cache', false, true)}
      <div class="right-tools">
        ${tool('upload', '上传')}
        ${tool('branch', '版本管理')}
        ${tool('menu', '详情')}
        ${tool('menu', '消息')}
      </div>
    </div>`;
  }

  renderSim() {
    return html`<div class="sim">
      <div class="subbar">
        <span class="device-name">8 Plus 100% 16<span class="caret"></span></span>
        <span class="hot">热重载 关<span class="caret"></span></span>
        <div class="sim-icons">
          <svg viewBox="0 0 16 16" fill="none" stroke="currentColor"><path d="M12 3a6 6 0 0 0-9 2M2 9a6 6 0 0 0 10 4M14 7a6 6 0 0 1-1 5M3 4l0 3h3"/></svg>
          <svg viewBox="0 0 16 16" fill="none" stroke="currentColor"><circle cx="8" cy="8" r="6.5"/><circle cx="8" cy="8" r="3" fill="currentColor"/></svg>
          <svg viewBox="0 0 16 16" fill="none" stroke="currentColor"><rect x="4" y="1.5" width="8" height="13" rx="1"/></svg>
          <svg viewBox="0 0 16 16" fill="none" stroke="currentColor"><rect x="5.5" y="2.5" width="9" height="8"/><path d="M5.5 5.5h-4v8h9v-3"/></svg>
        </div>
      </div>
      <div class="phone">
        <div class="phone-status">
          <div class="wechat"><i></i><span>WeChat</span>
            <svg width="11" height="9" viewBox="0 0 12 10" fill="none" stroke="#ddd"><path d="M1 3q5-4 10 0M3 5.500q3-2.500 6 0M5 8q1-1 2 0"/></svg>
          </div>
          <span>15:05</span>
          <div class="batt"><span>100%</span><i></i></div>
        </div>
        <div class="phone-nav">
          <span></span><span>地图</span>
          <div class="capsule">
            <div class="dots"><i></i><i></i><i></i></div>
            <span class="rule"></span>
            <span class="target"></span>
          </div>
        </div>
        <div class="page-head"><span>返回</span><span>地图</span></div>
        <div class="map">
          ${mapGraphic()}
          <div class="maptype"><span>地图</span><span>卫星</span><span>三维</span></div>
          <div class="mapside"><i></i></div>
          <div class="mapcity">重庆市</div>
        </div>
        <div class="tabbar">${TABBAR.map((t, i) => html`<div>
          <svg viewBox="0 0 22 22"><circle cx="11" cy="11" r="11" fill="#aeaeb0"/>${TAB_GLYPHS[i]}</svg>
          <span>${t}</span>
        </div>`)}</div>
      </div>
      <div class="watermark"><span>录制工具</span><span>KK 录像机</span></div>
    </div>`;
  }

  renderExplorer() {
    return html`<div class="explorer">
      <div class="explorer-tabs">
        <svg class="on" viewBox="0 0 16 16" fill="none" stroke="currentColor" stroke-width="1.300"><path d="M6 1.5h4l3 3v7H6zM6 4.500H3v10h7v-3"/></svg>
        <svg viewBox="0 0 16 16" fill="none" stroke="currentColor"><circle cx="10" cy="6" r="4.5"/><path d="M6.5 9.5L1.500 14.500"/></svg>
        <svg viewBox="0 0 16 16" fill="none" stroke="currentColor"><circle cx="4.5" cy="2.5" r="1.5"/><circle cx="4.5" cy="13.5" r="1.5"/><circle cx="12" cy="5.5" r="1.5"/><path d="M4.5 4v8M5 11q6-1 7-4"/></svg>
        <svg viewBox="0 0 16 16" fill="none" stroke="currentColor"><rect x="1.5" y="7.5" width="6" height="6"/><rect x="7.5" y="7.5" width="6" height="6"/><rect x="1.5" y="3.5" width="6" height="4"/><rect x="9.5" y="1.5" width="5" height="5"/></svg>
        <svg viewBox="0 0 16 16" fill="none" stroke="currentColor"><rect x="2.5" y="2.5" width="11" height="11"/><path d="M2.5 7h11M5 2.500V5h6V2.500M5 13.500V10h6v3.500"/></svg>
        <svg viewBox="0 0 16 16" fill="currentColor"><path d="M1 9h11q2 0 3-3 1 4-3 7H5Q2 13 1 9z"/><rect x="4" y="6" width="2" height="2"/><rect x="7" y="6" width="2" height="2"/><rect x="7" y="3" width="2" height="2"/></svg>
        <svg class="collapse" viewBox="0 0 16 16" fill="none" stroke="currentColor"><path d="M3 2h3v12H3zM14 8H8M10.500 5.500L8 8l2.500 2.500"/></svg>
      </div>
      <div class="explorer-head"><span>资源管理器</span><span>···</span></div>
      <div class="explorer-row">打开的编辑器</div>
      <div class="explorer-row">WECHATAPP</div>
      <div class="explorer-row">大纲</div>
    </div>`;
  }

  renderDebug() {
    const reload = html`<svg viewBox="0 0 16 16" fill="none" stroke="currentColor" stroke-width="2"><path d="M12.500 5a5.500 5.500 0 1 0 .5 4.500M13.500 1.500v4h-4"/></svg>`;
    return html`<div class="debug">
      <div class="debug-tabs">
        <span class="on">调试器</span><span class="count">1</span>
        <span>问题</span><span>输出</span><span>终端</span><span>代码质量</span>
      </div>
      <div class="dev-tabs">
        <div class="inspect"><svg viewBox="0 0 16 16" fill="none" stroke="currentColor"><path d="M7 13.500H1.500v-11h12V7"/><path d="M7 7l2.500 7.500 1.500-3 3 3 1-1-3-3 3-1.500z" fill="currentColor" stroke="none"/></svg></div>
        ${DEV_TABS.map((t) => html`<div class="tab ${t === 'Performance' ? 'on' : ''} ${t === 'Sensor' ? 'gap' : ''}">${t}</div>`)}
        <div class="dev-status">
          <svg viewBox="0 0 12 12"><path d="M6 .5l5.500 10.500H.5z" fill="#e8b83c"/></svg><span>1</span>
          <svg viewBox="0 0 12 12"><path d="M1 1.500h10v7H5L2 11V8.500H1z" fill="#2f6fe0"/></svg><span>1</span>
          <svg class="gear" viewBox="0 0 16 16"><circle cx="8" cy="8" r="4" fill="none" stroke="currentColor" stroke-width="3"/></svg>
        </div>
      </div>
      <div class="rec-bar">
        <svg class="first" viewBox="0 0 14 14"><circle cx="7" cy="7" r="5.500" fill="currentColor"/></svg>
        <svg class="i" viewBox="0 0 16 16" fill="none" stroke="currentColor" stroke-width="2"><path d="M12.500 5a5.500 5.500 0 1 0 .5 4.500M13.500 1.500v4h-4"/></svg>
        <svg class="i" viewBox="0 0 16 16" fill="none" stroke="currentColor" stroke-width="2"><circle cx="8" cy="8" r="5.500"/><path d="M4 4l8 8"/></svg>
        <svg class="up" viewBox="0 0 16 16" fill="currentColor"><path d="M8 2l5 5h-3v4H6V7H3zM3 12.500h10V14H3z"/></svg>
        <svg class="i dim" viewBox="0 0 16 16" fill="currentColor"><path d="M6 2h4v5h3l-5 5-5-5h3zM3 12.500h10V14H3z"/></svg>
        <div class="none"><span>(no recordings)</span><span class="caret"></span></div>
        <span class="box"></span><span>Counter</span>
        <svg class="trash" viewBox="0 0 16 16" fill="currentColor"><path d="M3 3.500h10V5H3zM6 1.500h4V3H6zM4 5.500h8L11 15H5z"/></svg>
      </div>
      <div class="rec-body">
        <div class="rec-line"><span>Click the record button</span><span class="key"><i></i></span><span>or hit <b>Ctrl + E</b> to start a new recording.</span></div>
        <div class="rec-line"><span>Click the reload button</span><span class="key">${reload}</span><span>or hit <b>Ctrl + Shift + E</b> to record the page load.</span></div>
        <div class="rec-note">
          After recording, select an area of interest in the overview by dragging.<br>
          Then, zoom and pan the timeline with the mousewheel or <b>WASD</b> keys.<br>
          <u>Learn more</u>
        </div>
      </div>
    </div>`;
  }

  renderTaskbar() {
    return html`<div class="taskbar">
      <div class="quick">
        ${QUICK.map((q, i) => html`<div class="app ${i > 1 ? 'run' : ''} ${i === 12 ? 'sel' : ''}">
          ${i === 0 ? html`<span class="circle"></span>` : i === 1 ? html`<span class="tasksview"></span>` : winIcon(q)}
        </div>`)}
        <div class="systray">
          <svg class="cloud" viewBox="0 0 22 16"><path d="M5 15a4.500 4.500 0 0 1 0-9 6 6 0 0 1 11-1 5 5 0 0 1 1 10z" fill="#cfe3f6"/></svg>
          <span>28°C</span><span class="cn">阴</span>
          <svg class="chev" viewBox="0 0 10 6" fill="none" stroke="#c8ccd2"><path d="M.5 5.500L5 1l4.500 4.500"/></svg>
          ${TRAY_TOP.map((t) => html`<span class="ti">${winIcon(t)}</span>`)}
          <span class="clock">15:06</span>
        </div>
      </div>
      <div class="tasks">
        ${TASKS.map(([icon, name]) => html`<div class="task ${icon === 'video' ? 'active' : ''}">${icon ? winIcon(icon) : html`<span class="blank"></span>`}<span>${name}</span></div>`)}
        <div class="tray">${TRAY_BOTTOM.map((t) => html`<span class="ti">${winIcon(t)}</span>`)}</div>
      </div>
    </div>`;
  }
}
